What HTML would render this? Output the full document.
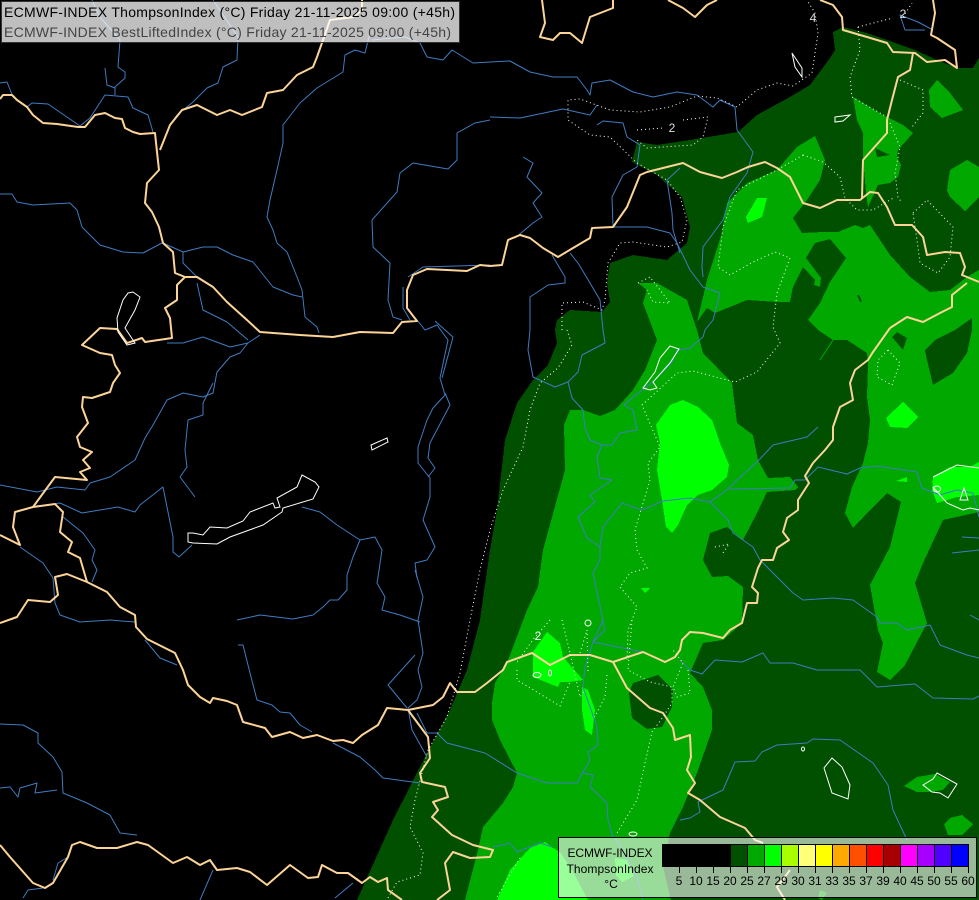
<!DOCTYPE html>
<html><head><meta charset="utf-8"><style>
html,body{margin:0;padding:0;background:#000;width:979px;height:900px;overflow:hidden}
svg{display:block}
text{font-family:"Liberation Sans",sans-serif}
.f{shape-rendering:crispEdges}
.r polyline{fill:none;stroke:#3f7cc0;stroke-width:1;stroke-linejoin:round}
.b polyline{fill:none;stroke:#fcd498;stroke-width:2;stroke-linejoin:round}
.w polygon,.w ellipse{fill:none;stroke:#fff;stroke-width:1}
.d polyline{fill:none;stroke:#fff;stroke-width:1;stroke-dasharray:1 3}
.t text{font-size:12px;fill:#000;text-anchor:middle}
</style></head><body>
<svg width="979" height="900" viewBox="0 0 979 900" xmlns="http://www.w3.org/2000/svg">
<rect width="979" height="900" fill="#000"/>
<g class="f">
<polygon fill="#005000" points="843,27 867,33 887,40 915,50 937,60 957,68 973,68 979,58 979,900 357,900 393,820 427,753 450,710 467,670 480,620 490,550 497,510 505,440 517,403 533,380 548,365 557,343 555,330 557,320 570,310 602,312 610,302 607,283 610,263 633,255 667,260 687,243 690,227 682,197 657,175 632,162 637,142 657,145 690,140 738,132 757,115 790,97 810,85 830,58 835,50 833,32"/>
<polygon fill="#00a800" points="564,425 570,410 583,410 600,416 615,410 633,390 645,370 657,340 643,303 647,290 638,283 657,283 687,300 697,330 703,353 732,383 737,423 753,435 758,460 768,478 790,477 798,487 795,490 767,492 757,513 743,540 727,527 710,533 703,560 712,577 728,576 743,587 742,623 723,640 703,643 690,673 703,687 712,710 712,730 697,773 683,807 670,833 663,867 671,900 465,900 478,850 483,827 503,803 513,787 517,773 500,740 492,720 492,703 495,683 507,663 527,610 538,587 543,550 565,470"/>
<polygon fill="#005000" points="633,683 658,675 673,690 672,707 662,727 647,729 632,718 629,693"/>
<polygon fill="#00a800" points="697,322 707,308 715,313 747,300 777,302 790,302 793,287 803,267 815,280 814,285 820,287 821,278 806,258 815,243 830,239 846,258 830,282 820,303 808,320 818,330 833,340 847,340 867,353 868,363 867,397 870,420 868,443 863,463 852,487 845,513 853,528 873,507 887,493 901,502 890,547 870,585 878,630 883,643 877,672 890,680 905,665 927,623 915,583 923,563 943,520 979,512 979,270 967,277 950,290 930,292 910,277 890,255 870,225 863,228 855,225 838,232 823,232 802,233 793,218 807,200 820,180 825,160 815,136 797,147 777,170 747,183 727,203 722,233 707,280 703,297"/>
<polygon fill="#005000" points="857,295 859,295 862,301 860,302"/>
<polygon fill="#005000" points="927,360 933,385 953,373 967,353 972,330 972,318 955,330 935,340 925,350"/>
<polygon fill="#005000" points="892,337 897,332 907,338 903,350"/>
<polygon fill="#00a800" points="853,97 883,115 903,125 913,133 898,150 897,157 901,165 898,177 890,183 878,185 868,207 866,193 863,157 863,133 857,120"/>
<polygon fill="#005000" points="875,148 890,155 877,157"/>
<polygon fill="#00a800" points="937,80 950,93 963,110 942,118 930,107 929,90"/>
<polygon fill="#00a800" points="967,160 979,167 979,197 965,211 950,197 947,190 950,170"/>
<polygon fill="#00a800" points="904,786 917,777 935,774 950,782 943,790 930,792 917,792"/>
<polygon fill="#00a800" points="944,824 950,818 962,815 973,824 962,835 948,835"/>
<polygon fill="#00a800" points="820,890 827,893 822,900 818,898"/>
<polygon fill="#00ff00" points="683,400 698,407 712,420 720,443 729,465 727,477 712,490 698,495 687,505 678,525 672,533 666,527 662,500 657,470 660,443 656,425 670,405"/>
<polygon fill="#00ff00" points="903,402 918,417 907,428 890,427 886,418"/>
<polygon fill="#00ff00" points="757,198 767,198 762,217 748,223 746,217"/>
<polygon fill="#00ff00" points="933,477 950,467 970,467 979,462 979,495 957,497 937,503 932,490"/>
<polygon fill="#00ff00" points="896,481 907,477 907,482"/>
<polygon fill="#00ff00" points="641,588 650,588 645,593"/>
<polygon fill="#00ff00" points="547,632 560,643 563,657 583,680 570,682 560,682 558,687 533,677 533,652"/>
<polygon fill="#00ff00" points="582,687 588,690 595,710 592,735 585,730 582,710"/>
<polygon fill="#00ff00" points="497,900 510,870 530,848 545,842 553,848 560,852 573,872 588,900"/>
<polygon fill="#00ff00" points="615,858 627,860 634,876 622,882 616,875"/>
</g>
<polyline points="820,360 833,340" fill="none" stroke="#00a800" stroke-width="1"/>
<g class="r">
<polyline points="92,0 100,17 120,40 118,67 125,72 125,78 115,87 115,95"/>
<polyline points="105,68 107,85 115,88"/>
<polyline points="0,83 7,82 13,97 27,107 32,103 48,104 80,126 90,118 105,95 128,97 133,108 148,115 153,132"/>
<polyline points="213,0 238,37 237,60 223,67 218,83 207,88 193,102 177,115 170,125 160,150"/>
<polyline points="0,194 12,194 17,202 33,205 70,203 77,210 82,227 100,245 123,252 143,253 162,243"/>
<polyline points="163,243 183,252 203,247 217,247 233,255 253,262 273,287 293,295 302,297"/>
<polyline points="183,252 183,263 197,277"/>
<polyline points="370,33 365,53 355,50 345,55 343,72 317,88 300,103 283,125 283,143 277,170 270,200 267,217 273,230 277,243 287,252 297,277 302,290 305,317 317,327 319,333"/>
<polyline points="490,120 475,123 457,133 457,160 448,169 413,163 400,173 397,192 372,220 373,247 390,263 388,300 393,317 402,320"/>
<polyline points="372,40 405,37 420,43 427,57 443,60 452,50 473,63 490,62 510,61 530,72 553,77 577,77 587,90 590,95 592,83 610,80 633,92 653,97 677,92 697,95 713,107 720,100 735,107 737,130 753,152 747,173 730,197 723,220 703,247 702,267 703,277"/>
<polyline points="490,117 520,118 563,109 590,115 597,105"/>
<polyline points="597,125 603,121 623,123 627,137 640,145 637,167 623,175 612,197 613,227 647,227 670,233 677,243 690,270 703,287 720,293 713,320 705,330 703,337 690,348 677,350 672,362 653,382 633,397 624,405 633,410 637,430 620,433 612,445 602,445 597,457 600,478 612,480 590,495 595,502 578,517 587,538 600,547 600,560 593,573 605,630 593,642"/>
<polyline points="523,157 533,163 527,177 542,193 533,203 542,217 533,223 515,238"/>
<polyline points="680,168 667,180 672,213 673,230 680,253"/>
<polyline points="552,255 565,277 565,283 548,285 530,297 530,330 528,350 533,377 555,387 568,382 572,398 583,410 585,428 590,440 602,445"/>
<polyline points="570,253 578,263 590,283 600,300 603,330 605,343 582,355 578,372 568,382"/>
<polyline points="818,427 807,437 773,445 757,462 737,480 727,490 710,502 690,498 663,501 642,510 622,503 603,527 600,547"/>
<polyline points="730,489 790,488 795,480 805,480 818,467 847,474 860,468 877,466 917,472 922,488 940,495 957,490 973,493 979,517"/>
<polyline points="710,502 728,520 733,533 753,547 760,560 777,577 793,593 803,600 833,598 853,600 877,617 880,623 897,623 907,630 930,625 940,645 967,655 979,658"/>
<polyline points="680,660 690,670 702,674 715,660 742,662 763,653 770,663 793,663 817,670 860,670 877,687 915,684 933,698 973,699 979,696"/>
<polyline points="680,820 690,818 700,812 698,802 723,790 735,762 755,761 762,752 777,745 807,743 813,739 840,740 873,763 888,785 893,810 907,840"/>
<polyline points="437,733 447,743 485,753 517,773 547,783 577,783 583,772 590,760 588,752 598,745 597,727 583,687 585,667 593,642 603,620"/>
<polyline points="593,642 643,652 665,662"/>
<polyline points="583,773 593,775 590,787 607,803 608,820 613,837 617,840 637,877 643,900"/>
<polyline points="493,847 510,843 517,852 540,843 552,847"/>
<polyline points="237,620 260,615 293,619 313,615 323,607 330,600 338,600 347,590 347,575 353,557 360,540 375,537 382,550 378,577 377,583 385,597 382,610 400,615 420,622"/>
<polyline points="360,540 337,525 320,512 302,507"/>
<polyline points="417,578 415,563 427,560 435,547 423,520 430,497 430,478 418,463 418,447 427,420 433,408 445,395 440,378 448,340 437,325 430,328 425,330 417,320"/>
<polyline points="445,393 450,405 430,443 428,458 435,468 428,477"/>
<polyline points="435,321 453,337 445,367 442,378"/>
<polyline points="415,570 423,597 418,620 423,653 418,670 422,687 417,700 408,708 412,730 427,757"/>
<polyline points="415,655 388,685 407,708"/>
<polyline points="417,713 427,733 437,733"/>
<polyline points="238,645 243,645 250,673 257,700 272,705 280,712 290,713 300,725 312,732"/>
<polyline points="333,743 360,757 375,770 383,778 420,783"/>
<polyline points="0,724 23,725 38,733 38,743 53,757 62,772 63,793 87,803 110,815 120,833 137,835"/>
<polyline points="0,788 10,787 18,797 20,788 37,783 35,793 57,790"/>
<polyline points="23,898 28,890 43,888"/>
<polyline points="53,880 58,863 68,857"/>
<polyline points="200,900 213,870"/>
<polyline points="335,898 353,883"/>
<polyline points="167,343 183,343 203,337 230,347 248,343 260,335"/>
<polyline points="248,343 240,353 230,357 217,372 213,393 203,397 183,393 167,400 153,425 145,438 135,460 110,477 90,483 85,490 57,487 37,492 0,485"/>
<polyline points="213,383 203,403 203,415 188,420 185,450 187,467 180,477 195,497"/>
<polyline points="33,507 60,503 82,513 118,507 135,512 140,505 163,487 173,537 173,552 179,557 192,545"/>
<polyline points="63,517 83,533 95,550 92,560 97,570 92,582"/>
<polyline points="20,547 43,563 53,578 55,603 60,615 80,622 110,620 135,622"/>
<polyline points="145,640 160,658 177,665"/>
<polyline points="197,283 203,310 227,322 248,340"/>
<polyline points="403,287 403,308 410,320"/>
<polyline points="408,277 423,267 490,265"/>
<polyline points="970,615 979,620"/>
<polyline points="962,537 979,538"/>
<polyline points="952,553 979,550"/>
<polyline points="933,30 918,22 900,15 905,30 925,30"/>
</g>
<g class="b">
<polyline points="0,99 3,95 12,95 17,100 27,107 33,115 43,123 57,124 78,127 85,127 95,115 105,113 115,118 122,119 125,128 133,132 140,134 155,133 157,152 159,170 147,183 145,203 152,212 159,227 163,243 173,252 175,273 185,277 197,277 213,287 227,302 247,320 260,332 300,335 333,337 360,332 393,333 402,322 417,321 407,308 407,290 413,275 427,269 467,271 480,265 490,266 502,265 508,240 520,235 530,238 543,248 558,257 573,248 590,238 592,228 613,227 627,207 640,175 647,172 683,163 700,172 722,178 737,172 748,167 765,162 777,168 790,177 803,203 820,208 837,200 860,200 870,192 878,193 887,207 895,225 912,225 923,237 927,255 945,252 960,253 965,267 962,275 979,282"/>
<polyline points="862,198 863,160 887,133 887,120 892,100 898,77 910,70 913,53"/>
<polyline points="820,0 833,5 842,17 843,30 867,37 887,43 893,52 915,53 927,62 945,60 957,68 955,50 937,38 931,35 935,13 933,0"/>
<polyline points="362,0 362,10 353,17 330,20 323,40 317,57 313,67 297,75 283,90 267,93 262,107 242,115 230,110 217,115 197,105 182,110 170,125 160,150"/>
<polyline points="542,0 545,23 540,37 553,40 560,33 570,33 582,43 590,17 613,8 613,0"/>
<polyline points="668,0 683,8 695,17 707,5 717,0"/>
<polyline points="890,328 907,317 923,322 940,313 952,307 952,295 967,283"/>
<polyline points="890,328 873,352 868,360 855,370 850,383 853,400 840,407 833,427 833,440 825,450 813,463 805,476 809,483 798,500 798,510 787,518 783,532 789,540 777,548 773,560 762,560 758,568 752,587 758,593 757,603 747,603 742,623 730,630 723,638 703,633 690,632 682,640 680,650 675,657 665,662 643,652 613,662 627,688 650,708 663,713 673,728 675,740 690,735 691,757 687,770 695,783 688,793 700,800 720,817 745,828 755,840 763,843"/>
<polyline points="790,870 777,887 785,900"/>
<polyline points="613,662 590,655 570,655 550,665 532,653 507,662 503,670 487,683 475,692 457,692 450,683 443,697 433,705 408,710 387,708 378,725 362,735 353,743 343,740 333,741 317,735 303,738 290,732 272,737 265,728 243,722 237,705 227,701 213,698 210,703 200,697 188,685 183,670 175,653 147,639 136,627 135,615 120,607 107,592 87,582 67,574 55,577 58,595 50,602 28,600 17,617 0,623"/>
<polyline points="87,582 80,558 68,552 72,542 60,532 63,512 55,504 33,507 15,512 13,527 20,545 0,535"/>
<polyline points="33,507 55,477 87,480 80,472 90,468 83,460 92,452 80,447 77,437 88,423 82,407 83,397 92,398 110,392 113,383 120,373 115,365 112,355 100,353 82,345 100,328 117,329 127,343 142,338 145,342 172,338 170,318 165,308 177,300 177,285 185,277"/>
<polyline points="0,845 10,857 33,883 45,888 53,883 68,857 72,845 80,842 97,848 117,848 137,842 148,845 173,863 187,857 200,865 210,860 217,870 237,868 250,872 267,885 290,865 308,878 318,877 322,865 337,873 348,873 362,883 370,877 378,882 387,878 388,890 402,900"/>
<polyline points="408,710 428,737 430,758 420,773 422,782 445,787 448,797 433,802 438,810 432,817 452,835 473,845 493,850 490,857 470,858 453,852 445,863 450,890 437,900"/>
</g>
<g class="w">
<polygon points="188,533 188,542 193,543 217,544 230,537 263,525 282,512 283,508 313,499 319,487 315,482 302,475 297,487 277,498 280,507 275,508 273,503 250,512 243,521 227,528 210,527 203,535 193,533"/>
<polygon points="371,445 387,438 388,442 372,450"/>
<polygon points="133,292 140,297 135,310 125,328 135,343 127,345 118,332 117,318 123,300 128,293"/>
<polygon points="792,53 802,68 802,77 795,67"/>
<polygon points="835,117 850,115 843,121 835,122"/>
<polygon points="670,346 679,349 670,363 653,382 657,388 650,390 643,388 655,372 660,358"/>
<polygon points="832,758 842,767 850,785 848,799 832,793 824,768"/>
<polygon points="937,773 957,784 948,798 940,793 932,792 923,785 933,779"/>
<polygon points="964,488 960,500 968,500" stroke-width="2"/>
<ellipse cx="803" cy="749" rx="1.5" ry="2"/>
<ellipse cx="937" cy="489" rx="3.5" ry="3"/>
<ellipse cx="537" cy="675" rx="4" ry="2.5"/>
<ellipse cx="550" cy="673" rx="1.5" ry="3"/>
<ellipse cx="588" cy="623" rx="3" ry="3"/>
<ellipse cx="633" cy="834" rx="4" ry="2"/>
</g>
<polyline points="933,477 957,465 979,468" fill="none" stroke="#fff"/>
<polyline points="933,487 947,503 963,510 970,508 979,510" fill="none" stroke="#fff"/>
<g class="d">
<polyline points="567,330 572,345 558,368 540,383 530,410 523,447 503,490 490,530 480,570 470,620 460,673 447,717 428,750 415,800 410,827 423,853 420,875 397,882 388,898"/>
<polyline points="562,330 562,303 583,302 602,310 605,300 608,263 620,243 633,242 667,247 682,242 687,220 680,197 667,180 637,163 610,137 590,135 568,120 568,100 580,99 610,110 640,112 670,107 697,96 717,98 737,107 757,90 777,83 793,86 812,73 818,33 815,13 807,0"/>
<polyline points="637,130 663,128"/>
<polyline points="683,120 708,117 703,137 693,145 647,148 637,140"/>
<polyline points="858,27 893,18"/>
<polyline points="903,17 912,3"/>
<polyline points="858,27 860,50 850,77 852,97 887,117"/>
<polyline points="900,80 923,90 923,113 912,127"/>
<polyline points="890,123 900,147 895,173 898,197 902,203"/>
<polyline points="803,155 823,162 840,177 845,198 857,210 873,210 895,197"/>
<polyline points="803,155 777,170 737,190 723,227 718,267 730,275 753,262 775,252 790,258 777,293 773,327 780,343 757,372 735,382 693,371 677,373 642,405 660,447 648,463 650,480 635,530 637,550 647,568 630,573 620,587 637,607 628,630 627,660"/>
<polyline points="913,213 927,200 953,227 950,257 938,273 920,263 917,240 913,213"/>
<polyline points="638,283 650,277 670,303 653,302 647,290"/>
<polyline points="888,350 900,363 892,385 877,377 878,360 888,350"/>
<polyline points="715,547 729,544 723,553"/>
<polyline points="517,670 517,680 560,706 570,682"/>
<polyline points="550,620 535,637 517,662"/>
<polyline points="562,620 570,653 580,697 585,690"/>
<polyline points="607,675 605,697 593,720"/>
<polyline points="580,653 587,630"/>
<polyline points="587,630 588,673"/>
<polyline points="632,620 628,670 650,682 672,687 672,703 663,717 652,732 645,763 637,800 617,833"/>
<polyline points="688,670 690,693 677,697 673,687 683,663 673,650"/>
<polyline points="520,858 497,897"/>
</g>
<text x="672" y="132" font-size="12" fill="#ddd" text-anchor="middle">2</text>
<text x="903" y="18" font-size="12" fill="#ddd" text-anchor="middle">2</text>
<text x="813" y="22" font-size="12" fill="#ddd" text-anchor="middle">4</text>
<text x="538" y="640" font-size="12" fill="#fff" text-anchor="middle">2</text>

<rect x="1.5" y="1.5" width="458" height="41" fill="#fff" fill-opacity=".75" stroke="#333" stroke-width="1"/>
<text x="4" y="17" font-size="14" fill="#000" textLength="451" lengthAdjust="spacing">ECMWF-INDEX ThompsonIndex (°C) Friday 21-11-2025 09:00 (+45h)</text>
<text x="4" y="37" font-size="14" fill="#444" textLength="447" lengthAdjust="spacing">ECMWF-INDEX BestLiftedIndex (°C) Friday 21-11-2025 09:00 (+45h)</text>

<rect x="558.5" y="837.5" width="418" height="60" fill="#fff" fill-opacity=".6" stroke="#000" stroke-width="1"/>
<g class="f">
<rect x="662" y="844" width="68.2" height="23" fill="#000"/>
<rect x="730.2" y="844" width="17.05" height="23" fill="#005000"/>
<rect x="747.2" y="844" width="17.05" height="23" fill="#00a800"/>
<rect x="764.3" y="844" width="17.05" height="23" fill="#00ff00"/>
<rect x="781.3" y="844" width="17.05" height="23" fill="#a8ff00"/>
<rect x="798.4" y="844" width="17.05" height="23" fill="#ffff78"/>
<rect x="815.4" y="844" width="17.05" height="23" fill="#ffff00"/>
<rect x="832.5" y="844" width="17.05" height="23" fill="#ffa800"/>
<rect x="849.5" y="844" width="17.05" height="23" fill="#ff5000"/>
<rect x="866.6" y="844" width="17.05" height="23" fill="#ff0000"/>
<rect x="883.6" y="844" width="17.05" height="23" fill="#a80000"/>
<rect x="900.7" y="844" width="17.05" height="23" fill="#ff00ff"/>
<rect x="917.7" y="844" width="17.05" height="23" fill="#a800ff"/>
<rect x="934.8" y="844" width="17.05" height="23" fill="#5000ff"/>
<rect x="951.8" y="844" width="17.2" height="23" fill="#0000ff"/>
</g>
<rect x="662.5" y="844.5" width="306" height="22" fill="none" stroke="#000"/>
<path d="M679.5 844V873M696.5 844V873M713.5 844V873M730.5 844V873M747.5 844V873M764.5 844V873M781.5 844V873M798.5 844V873M815.5 844V873M832.5 844V873M849.5 844V873M866.5 844V873M883.5 844V873M900.5 844V873M917.5 844V873M934.5 844V873M951.5 844V873M968.5 844V873" stroke="#000" stroke-width="1" fill="none"/>
<g class="t">
<text x="610" y="857" textLength="85" lengthAdjust="spacing">ECMWF-INDEX</text>
<text x="610" y="873" textLength="87" lengthAdjust="spacing">ThompsonIndex</text>
<text x="611" y="888">°C</text>
<text x="679" y="885">5</text><text x="696" y="885">10</text><text x="713" y="885">15</text><text x="730" y="885">20</text><text x="747" y="885">25</text><text x="764" y="885">27</text><text x="781" y="885">29</text><text x="798" y="885">30</text><text x="815" y="885">31</text><text x="832" y="885">33</text><text x="849" y="885">35</text><text x="866" y="885">37</text><text x="883" y="885">39</text><text x="900" y="885">40</text><text x="917" y="885">45</text><text x="934" y="885">50</text><text x="951" y="885">55</text><text x="968" y="885">60</text>
</g>
</svg>
</body></html>
